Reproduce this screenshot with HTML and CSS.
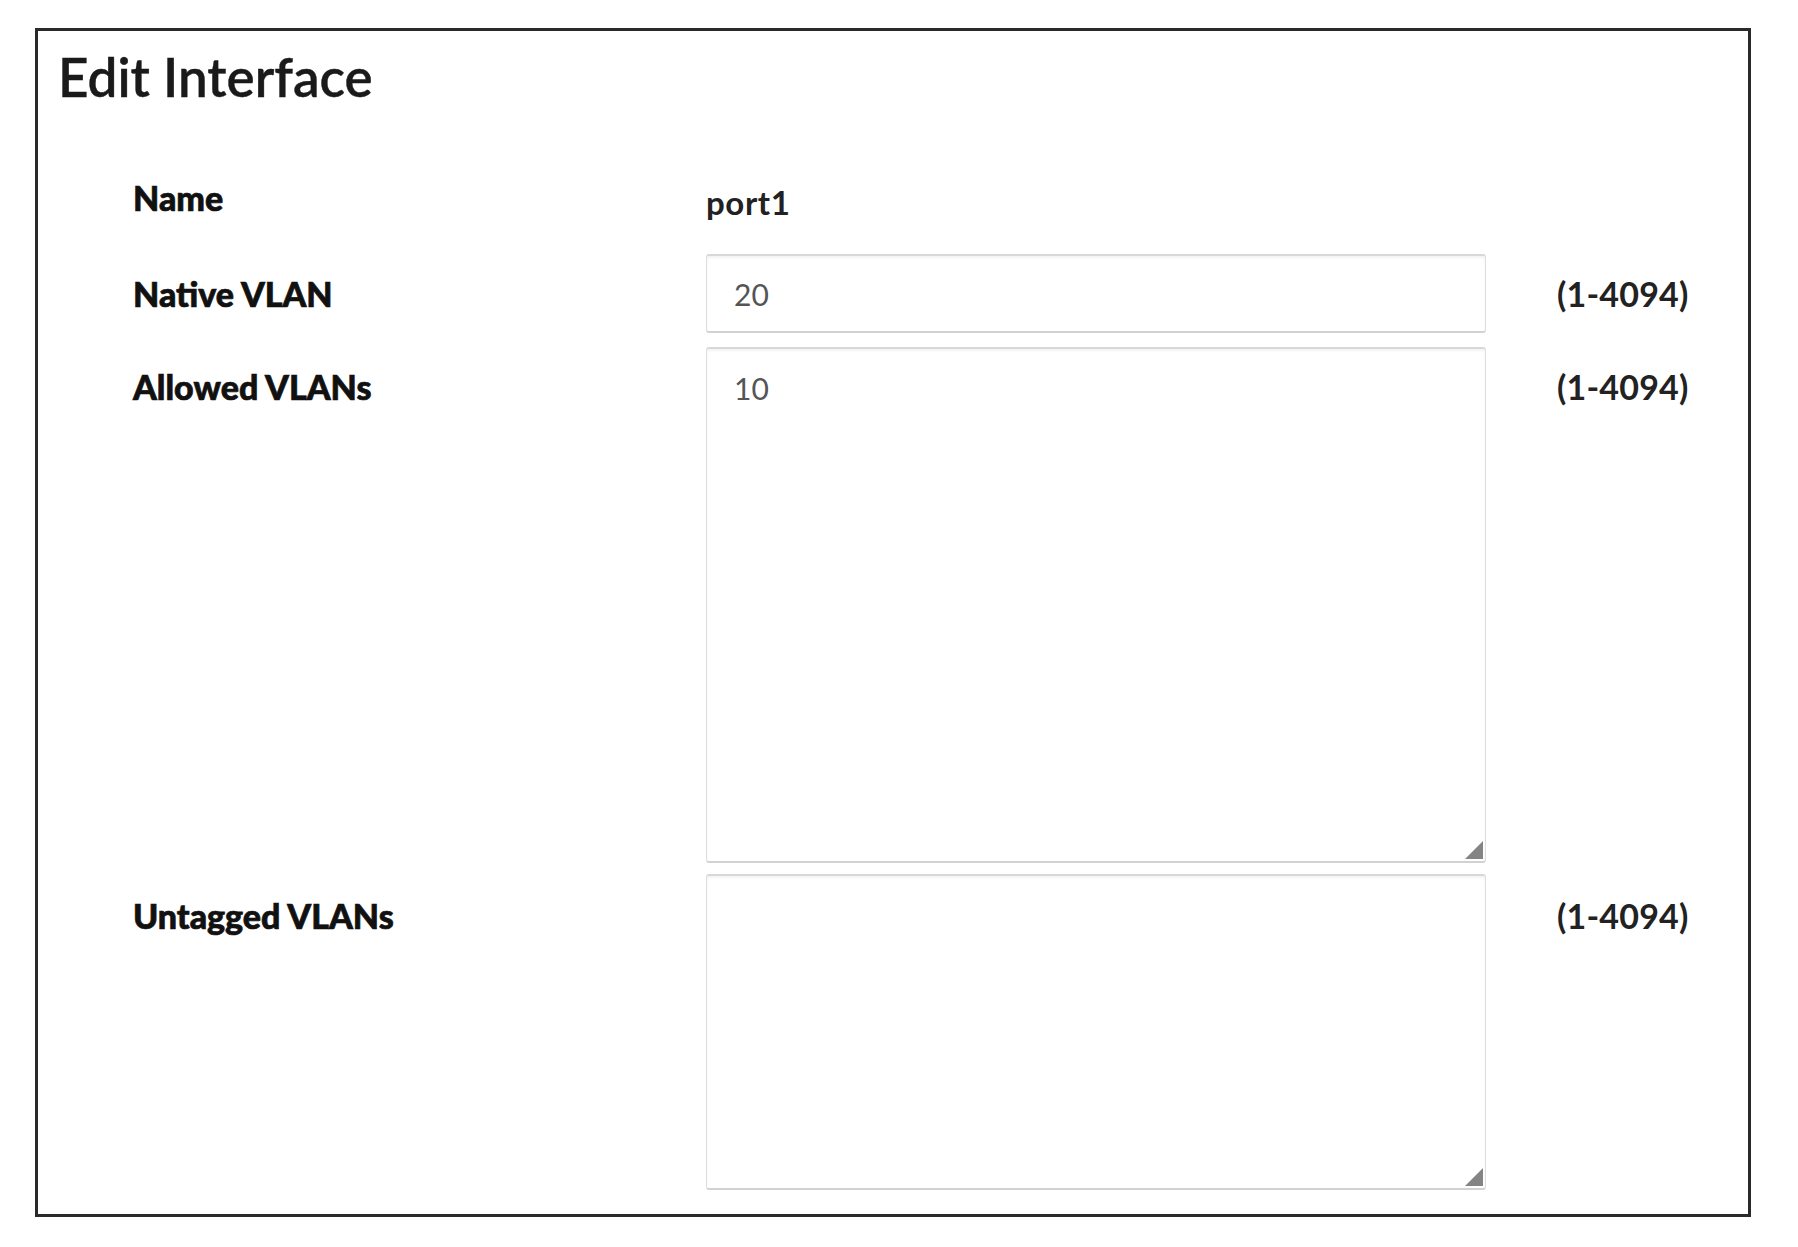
FILE: index.html
```html
<!DOCTYPE html>
<html lang="en">
<head>
<meta charset="utf-8">
<title>Edit Interface</title>
<link rel="stylesheet" href="styles.css">
</head>
<body>
<div class="panel">
  <h1 class="title">Edit Interface</h1>
  <div class="form">
    <div class="row row-name">
      <div class="label">Name</div>
      <div class="value">port1</div>
    </div>
    <div class="row row-native">
      <label class="label" for="native">Native VLAN</label>
      <div class="field-wrap">
        <input id="native" class="field input" type="text" value="20">
      </div>
      <span class="hint">(1-4094)</span>
    </div>
    <div class="row row-allowed">
      <label class="label" for="allowed">Allowed VLANs</label>
      <div class="field-wrap">
        <textarea id="allowed" class="field area area-allowed">10</textarea>
        <span class="grip"></span>
      </div>
      <span class="hint">(1-4094)</span>
    </div>
    <div class="row row-untagged">
      <label class="label" for="untagged">Untagged VLANs</label>
      <div class="field-wrap">
        <textarea id="untagged" class="field area area-untagged"></textarea>
        <span class="grip"></span>
      </div>
      <span class="hint">(1-4094)</span>
    </div>
  </div>
</div>
</body>
</html>
```

FILE: styles.css
```css
* { box-sizing: border-box; }

html, body {
  margin: 0;
  padding: 0;
  background: #ffffff;
}

body {
  font-family: Lato, "Open Sans", "Liberation Sans", sans-serif;
  color: #161616;
}

.panel {
  margin: 28px 0 0 35px;
  width: 1716px;
  height: 1189px;
  border: 3px solid #2a2a2a;
  background: #fff;
  padding: 19px 0 0 20px;
}

.title {
  margin: 0;
  font-size: 53px;
  line-height: 53px;
  font-weight: 600;
  color: #1a1a1a;
  -webkit-text-stroke: 0.4px #1a1a1a;
}

.form {
  margin: 75px 0 0 75px;
  display: flex;
  flex-direction: column;
}

.row {
  display: grid;
  grid-template-columns: 573px 780px auto;
  align-items: start;
}

.row-native { margin-top: 32px; }
.row-allowed { margin-top: 14px; }
.row-untagged { margin-top: 11px; }

.label {
  font-size: 34px;
  line-height: 40px;
  font-weight: 900;
  color: #111;
  letter-spacing: 0;
  padding-top: 20px;
  -webkit-text-stroke: 0.7px #111;
}

.row-name .label { padding-top: 0; }
.row-untagged .label { padding-top: 22px; }

.value {
  font-size: 33px;
  line-height: 40px;
  font-weight: 700;
  color: #222;
  padding-top: 4px;
  letter-spacing: 0.6px;
}

.hint {
  margin-left: 71px;
  font-size: 34px;
  line-height: 40px;
  font-weight: 700;
  color: #222;
  padding-top: 20px;
  letter-spacing: 0.2px;
}

.row-untagged .hint { padding-top: 22px; }

.field-wrap {
  position: relative;
  width: 780px;
}

.field {
  display: block;
  width: 100%;
  margin: 0;
  font-family: Lato, "Open Sans", "Liberation Sans", sans-serif;
  font-size: 30px;
  color: #555;
  background: #fff;
  border: 1px solid #dedede;
  border-top: 2px solid #d8d8d8;
  border-bottom: 2px solid #d2d2d2;
  border-radius: 3px;
  box-shadow: inset 0 2px 3px rgba(0, 0, 0, 0.05);
  outline: none;
}

.input {
  height: 79px;
  padding: 0 0 0 27px;
}

.area {
  padding: 21px 27px;
  line-height: 36px;
  resize: none;
  overflow: hidden;
}

.area-allowed { height: 516px; }
.area-untagged { height: 316px; }

.grip {
  position: absolute;
  right: 3px;
  bottom: 4px;
  width: 0;
  height: 0;
  border-left: 18px solid transparent;
  border-bottom: 18px solid #6e6e6e;
  opacity: 0.85;
}
```
